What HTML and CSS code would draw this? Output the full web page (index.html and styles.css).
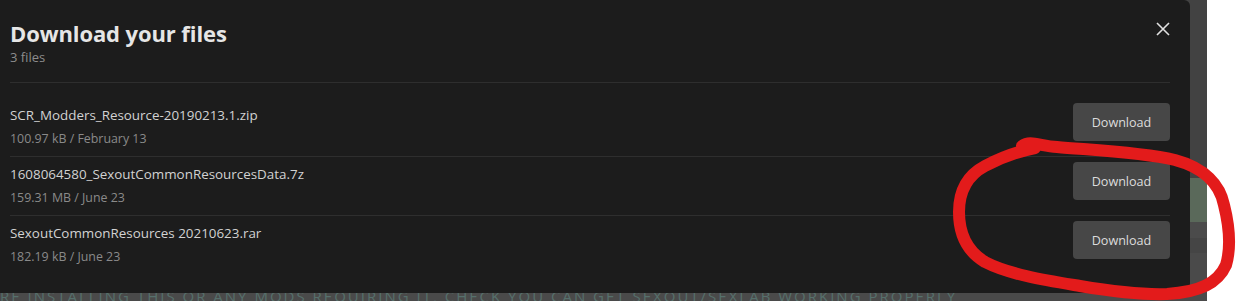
FILE: index.html
```html
<!DOCTYPE html>
<html>
<head>
<meta charset="utf-8">
<link rel="stylesheet" href="styles.css">
</head>
<body>
<div class="page">
  <div class="backdrop">
    <div class="band band-a"></div>
    <div class="band band-b"></div>
    <div class="band band-c"></div>
    <div class="band band-d"></div>
    <div class="band band-e"></div>
    <p class="bg-text">RE INSTALLING THIS OR ANY MODS REQUIRING IT, CHECK YOU CAN GET SEXOUT/SEXLAB WORKING PROPERLY</p>
  </div>
  <div class="white"></div>

  <section class="modal">
    <header class="modal-head">
      <div>
        <h1 class="title">Download your files</h1>
        <div class="count">3 files</div>
      </div>
      <button class="close" aria-label="Close">
        <svg width="14" height="14" viewBox="0 0 14 14"><path d="M1 1 L13 13 M13 1 L1 13" stroke="#e0e0e0" stroke-width="1.6" fill="none"/></svg>
      </button>
    </header>
    <ul class="files">
      <li class="file">
        <div class="info">
          <div class="name">SCR_Modders_Resource-20190213.1.zip</div>
          <div class="meta">100.97 kB / February 13</div>
        </div>
        <button class="dl">Download</button>
      </li>
      <li class="file">
        <div class="info">
          <div class="name">1608064580_SexoutCommonResourcesData.7z</div>
          <div class="meta">159.31 MB / June 23</div>
        </div>
        <button class="dl">Download</button>
      </li>
      <li class="file">
        <div class="info">
          <div class="name">SexoutCommonResources 20210623.rar</div>
          <div class="meta">182.19 kB / June 23</div>
        </div>
        <button class="dl">Download</button>
      </li>
    </ul>
  </section>

  <svg class="scribble" width="1238" height="301" viewBox="0 0 1238 301">
    <path d="M1022 146 C1030 140 1040 146 1057 147 C1090 150 1140 152 1175 160 C1205 168 1220 185 1224 205 C1229 225 1231 248 1226 265 C1218 283 1200 292 1167 294 C1140 295 1110 291 1080 286 C1050 281 1010 275 985 262 C965 250 959 232 959 212 C959 190 968 175 985 166 C1000 158 1015 152 1035 148" stroke="#e31b1b" stroke-width="12" fill="none" stroke-linecap="round" stroke-linejoin="round"/>
  </svg>
</div>
</body>
</html>
```

FILE: styles.css
```css
* { box-sizing: border-box; }
html, body { margin: 0; padding: 0; }
body {
  width: 1238px;
  height: 301px;
  overflow: hidden;
  background: #ffffff;
  font-family: "Open Sans", "Noto Sans", sans-serif;
}
.page {
  position: relative;
  display: flex;
  width: 1238px;
  height: 301px;
}
.backdrop {
  width: 1207px;
  height: 301px;
  background: #484848;
  display: flex;
  flex-direction: column;
  position: relative;
  overflow: hidden;
}
.band { width: 100%; }
.band-a { height: 178px; background: #424242; }
.band-b { height: 44px; background: #5a695a; }
.band-c { height: 16px; background: #4b4b4b; }
.band-d { height: 15px; background: #454545; }
.band-e { flex: 1; background: #4a4a4a; }
.bg-text {
  position: absolute;
  left: 0;
  top: 287px;
  margin: 0;
  white-space: nowrap;
  font-size: 15px;
  line-height: 18px;
  letter-spacing: 2px;
  color: #56706c;
}
.white { flex: 1; background: #ffffff; }

.modal {
  position: absolute;
  left: 0;
  top: 0;
  width: 1190px;
  height: 293px;
  background: #1c1c1c;
  border-radius: 0 6px 0 0;
  padding: 0 20px 0 10px;
}
.modal-head {
  display: flex;
  justify-content: space-between;
  align-items: flex-start;
  padding-top: 19px;
  height: 83px;
  border-bottom: 1px solid #2e2e2e;
}
.title {
  margin: 0;
  font-size: 22px;
  line-height: 28px;
  font-weight: 700;
  color: #e6e6e6;
  letter-spacing: -0.1px;
}
.count {
  font-size: 13px;
  line-height: 16px;
  color: #8c8c8c;
  margin-top: 2px;
}
.close {
  background: none;
  border: 0;
  padding: 0;
  margin: 3px 0 0 0;
  width: 14px;
  height: 14px;
  cursor: pointer;
  display: flex;
}
.files {
  list-style: none;
  margin: 0;
  padding: 15px 0 0 0;
}
.file {
  display: flex;
  align-items: flex-start;
  justify-content: space-between;
  height: 59px;
  padding-top: 5px;
  border-bottom: 1px solid #2e2e2e;
}
.file:last-child { border-bottom: 0; }
.info {
  display: flex;
  flex-direction: column;
  gap: 6px;
  padding-top: 3px;
}
.name {
  font-size: 13.4px;
  line-height: 19px;
  color: #d2d2d2;
}
.meta {
  font-size: 12.4px;
  line-height: 16px;
  color: #8a8a8a;
}
.dl {
  width: 97px;
  height: 38px;
  background: #474747;
  border: 0;
  border-radius: 4px;
  color: #dcdcdc;
  font-family: "Open Sans", "Noto Sans", sans-serif;
  font-size: 12.6px;
  cursor: pointer;
}
.scribble {
  position: absolute;
  left: 0;
  top: 0;
  pointer-events: none;
}
```
